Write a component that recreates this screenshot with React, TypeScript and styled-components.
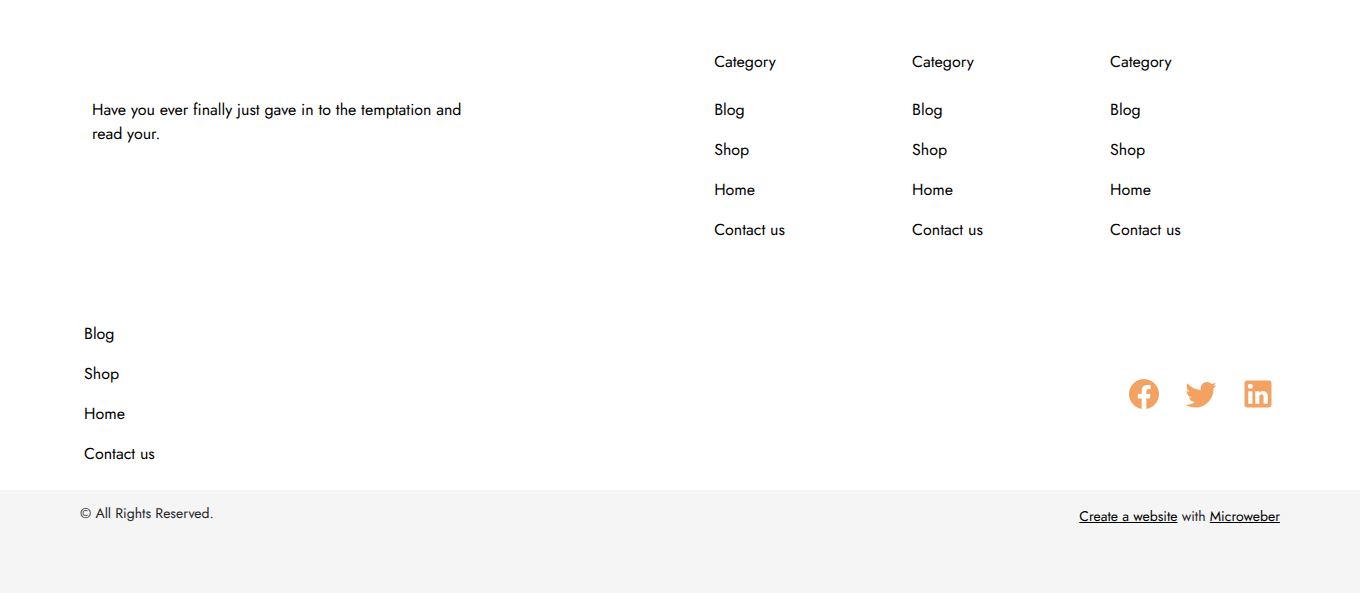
import React from "react";
import styled, { createGlobalStyle } from "styled-components";

const GlobalStyle = createGlobalStyle`
  * { box-sizing: border-box; }
  html { background: #f5f5f5; }
  body {
    margin: 0;
    font-family: Jost, Lato, sans-serif;
    font-size: 16px;
    line-height: 24px;
    color: #000;
    text-rendering: geometricPrecision;
  }
`;

const Footer = styled.footer`
  background: #fff;
`;

const TopRow = styled.div`
  display: grid;
  grid-template-columns: 22fr 21fr;
  padding: 51px 52px 64px 92px;
`;

const Intro = styled.p`
  margin: 48px 0 0;
  max-width: 400px;
`;

const Categories = styled.div`
  display: grid;
  grid-template-columns: repeat(3, 1fr);
`;

const CategoryTitle = styled.h2`
  margin: 0 0 16px;
  font-size: 16px;
  font-weight: 400;
  line-height: 24px;
`;

const LinkList = styled.ul`
  margin: 0;
  padding: 0;
  list-style: none;
`;

const LinkItem = styled.li`
  padding: 8px 0;
`;

const MenuLink = styled.a`
  display: inline-block;
  vertical-align: top;
  color: #000;
  text-decoration: none;
`;

const BottomRow = styled.div`
  display: flex;
  align-items: center;
  justify-content: space-between;
  padding: 0 84px 15px;
`;

const Socials = styled.div`
  display: flex;
  gap: 21px;
  padding-bottom: 2px;
`;

const SocialLink = styled.a`
  display: block;
  height: 36px;
  color: #f4a261;
`;

const LegalBar = styled.div`
  display: flex;
  justify-content: space-between;
  padding: 12px 80px 64px;
  background: #f5f5f5;
  color: #212529;
  font-size: 14px;
`;

const LegalText = styled.p`
  margin: 0;
`;

const Credit = styled.p`
  margin: 3px 0 0;
`;

const CreditLink = styled.a`
  color: #000;
`;

const menu = ["Blog", "Shop", "Home", "Contact us"];

const socials = [
  {
    name: "Facebook",
    path: "M12 2.04C6.5 2.04 2 6.53 2 12.06C2 17.06 5.66 21.21 10.44 21.96V14.96H7.9V12.06H10.44V9.85C10.44 7.34 11.93 5.96 14.22 5.96C15.31 5.96 16.45 6.15 16.45 6.15V8.62H15.19C13.95 8.62 13.56 9.39 13.56 10.18V12.06H16.34L15.89 14.96H13.56V21.96A10 10 0 0 0 22 12.06C22 6.53 17.5 2.04 12 2.04Z",
  },
  {
    name: "Twitter",
    path: "M22.46,6C21.69,6.35 20.86,6.58 20,6.69C20.88,6.16 21.56,5.32 21.88,4.31C21.05,4.81 20.13,5.16 19.16,5.36C18.37,4.5 17.26,4 16,4C13.65,4 11.73,5.92 11.73,8.29C11.73,8.63 11.77,8.96 11.84,9.27C8.28,9.09 5.11,7.38 3,4.79C2.63,5.42 2.42,6.16 2.42,6.94C2.42,8.43 3.17,9.75 4.33,10.5C3.62,10.5 2.96,10.3 2.38,10C2.38,10 2.38,10 2.38,10.03C2.38,12.11 3.86,13.85 5.82,14.24C5.46,14.34 5.08,14.39 4.69,14.39C4.42,14.39 4.15,14.36 3.89,14.31C4.43,16 6,17.26 7.89,17.29C6.43,18.45 4.58,19.13 2.56,19.13C2.22,19.13 1.88,19.11 1.54,19.07C3.44,20.29 5.7,21 8.12,21C16,21 20.33,14.46 20.33,8.79C20.33,8.6 20.33,8.42 20.32,8.23C21.16,7.63 21.88,6.87 22.46,6Z",
  },
  {
    name: "LinkedIn",
    path: "M19 3A2 2 0 0 1 21 5V19A2 2 0 0 1 19 21H5A2 2 0 0 1 3 19V5A2 2 0 0 1 5 3H19M18.5 18.5V13.2A3.26 3.26 0 0 0 15.24 9.94C14.39 9.94 13.4 10.46 12.92 11.24V10.13H10.13V18.5H12.92V13.57C12.92 12.8 13.54 12.17 14.31 12.17A1.4 1.4 0 0 1 15.71 13.57V18.5H18.5M6.88 8.56A1.68 1.68 0 0 0 8.56 6.88C8.56 5.95 7.81 5.19 6.88 5.19A1.69 1.69 0 0 0 5.19 6.88C5.19 7.81 5.95 8.56 6.88 8.56M8.27 18.5V10.13H5.5V18.5H8.27Z",
  },
];

function Menu() {
  return (
    <LinkList>
      {menu.map((label) => (
        <LinkItem key={label}>
          <MenuLink href="#">{label}</MenuLink>
        </LinkItem>
      ))}
    </LinkList>
  );
}

export default function App() {
  return (
    <>
      <GlobalStyle />
      <Footer>
        <TopRow>
          <Intro>
            Have you ever finally just gave in to the temptation and read your.
          </Intro>
          <Categories>
            {[1, 2, 3].map((n) => (
              <nav key={n}>
                <CategoryTitle>Category</CategoryTitle>
                <Menu />
              </nav>
            ))}
          </Categories>
        </TopRow>
        <BottomRow>
          <nav>
            <Menu />
          </nav>
          <Socials>
            {socials.map((s) => (
              <SocialLink key={s.name} href="#" aria-label={s.name}>
                <svg width="36" height="36" viewBox="0 0 24 24" fill="currentColor">
                  <path d={s.path} />
                </svg>
              </SocialLink>
            ))}
          </Socials>
        </BottomRow>
        <LegalBar>
          <LegalText>© All Rights Reserved.</LegalText>
          <Credit>
            <CreditLink href="#">Create a website</CreditLink> with{" "}
            <CreditLink href="#">Microweber</CreditLink>
          </Credit>
        </LegalBar>
      </Footer>
    </>
  );
}
